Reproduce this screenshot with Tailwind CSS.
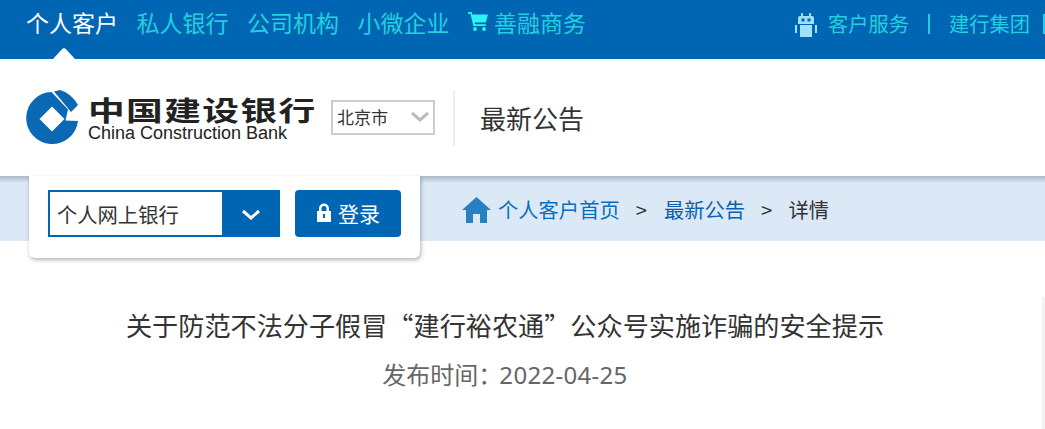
<!DOCTYPE html>
<html lang="zh-CN">
<head>
  <meta charset="UTF-8">
  <title>最新公告</title>
  <script src="https://cdn.jsdelivr.net/npm/@tailwindcss/browser@4"></script>
</head>
<body class="bg-white overflow-hidden h-[429px] w-[1045px] relative font-['Noto_Sans_CJK_SC',sans-serif] text-[#333]">
  <!-- top nav -->
  <nav class="h-[59px] bg-[#0066b3] flex items-start justify-between pl-[26px] pt-[5px] text-[#22d0df] whitespace-nowrap relative">
    <div class="flex items-center gap-[18.5px] text-[23px] leading-[34px]">
      <a class="text-white">个人客户</a>
      <a>私人银行</a>
      <a>公司机构</a>
      <a>小微企业</a>
      <a class="flex items-center gap-[6px]">
        <svg class="w-[20px] h-[20px] -mt-[3px]" viewBox="0 0 20 20" fill="#2df3f5">
          <path d="M0 1h3.6l.8 2.4H20l-2.2 8.2H6.600l.4 1.600h10.800v1.800H5.400L2.400 2.800H0z"/>
          <circle cx="7" cy="18" r="1.900"/>
          <circle cx="16" cy="18" r="1.900"/>
        </svg>
        善融商务
      </a>
    </div>
    <div class="flex items-center text-[20.250px] leading-[34px] mt-[2px]">
      <svg class="w-[22px] h-[24px] mr-[11px] mt-[1px]" viewBox="0 0 22 24" fill="#9fe0ff">
        <rect x="6" y="0" width="2" height="4"/>
        <rect x="14" y="0" width="2" height="4"/>
        <path d="M5 3h12a2 2 0 0 1 2 2v6H3V5a2 2 0 0 1 2-2z"/>
        <rect x="6.500" y="5.500" width="3" height="3" fill="#0066b3"/>
        <rect x="12.500" y="5.500" width="3" height="3" fill="#0066b3"/>
        <rect x="5" y="12" width="12" height="12"/>
        <rect x="0" y="12" width="2" height="8"/>
        <rect x="20" y="12" width="2" height="8"/>
      </svg>
      <a>客户服务</a>
      <span class="w-[2px] h-[20px] bg-[#22d0df] ml-[19px] mr-[19px]"></span>
      <a>建行集团</a>
      <span class="w-[2px] h-[20px] bg-[#22d0df] ml-[13px]"></span>
    </div>
    <span class="absolute left-[53px] bottom-0 w-[22px] h-[11px] bg-white [clip-path:polygon(0_100%,42%_8%,50%_0,58%_8%,100%_100%)]"></span>
  </nav>

  <!-- logo row -->
  <header class="h-[117px] flex items-center pl-[26px]">
    <div class="w-[305px] h-[60px] flex items-center shrink-0">
      <svg class="w-[54px] h-[58px] shrink-0" viewBox="26 90 54 58">
        <path fill="#0a68b4" d="M78 122A26 26 0 1 1 51.500 93L68 110.500L65.500 121.500Z"/>
        <path fill="#0a68b4" d="M54 92.500L60 91Q71 94 78 106L71 113Z"/>
        <polygon fill="#fff" points="52,107.500 64.500,120 52,132.500 39.500,120"/>
      </svg>
      <div class="ml-[8px] mt-[4px] text-[#222]">
        <div class="text-[27px] leading-[27px] font-bold tracking-[1px] scale-x-[1.36] origin-left whitespace-nowrap">中国建设银行</div>
        <div class="text-[18px] leading-[20px] font-['Liberation_Sans',sans-serif] whitespace-nowrap">China Construction Bank</div>
      </div>
    </div>
    <div class="w-[104px] h-[35px] border-2 border-[#ccc] flex items-center justify-between pl-[4px] pr-[3px] pb-[2px] text-[17px] shrink-0">
      <span>北京市</span>
      <svg class="w-[20px] h-[12px]" viewBox="0 0 20 12" fill="none" stroke="#bbb" stroke-width="3"><path d="M2 2l8 7 8-7"/></svg>
    </div>
    <span class="w-[2px] h-[56px] bg-[#eee] ml-[18px] mr-[25px] shrink-0"></span>
    <h1 class="text-[26px] text-[#333]">最新公告</h1>
  </header>

  <!-- breadcrumb band -->
  <div class="h-[65px] bg-[#dbe9f7] bg-linear-to-b from-[#a9b8c4] from-0% to-[#dbe9f7] to-[7px] flex items-center pl-[462px] pt-[2px] text-[20.300px] whitespace-nowrap">
    <svg class="w-[29px] h-[26px] mr-[7px]" viewBox="0 0 29 26" fill="#2a7fc1">
      <path d="M14.500 0L29 13h-4v13h-7V17h-7v9H4V13H0z"/>
    </svg>
    <a class="text-[#0a6fb8]">个人客户首页</a>
    <span class="ml-[16px] mr-[17px] text-[#333]">&gt;</span>
    <a class="text-[#0a62ae]">最新公告</a>
    <span class="ml-[16px] mr-[16px] text-[#333]">&gt;</span>
    <span class="text-[#333]">详情</span>
  </div>

  <!-- login card over the band -->
  <div class="absolute left-[29px] top-[176px] w-[391px] h-[82px] bg-white rounded-b-md shadow-[1px_2px_4px_rgba(0,0,0,0.3)] flex items-start pt-[14px] pl-[19px]">
    <div class="w-[232px] h-[47px] flex border-2 border-[#0066b3]">
      <div class="w-[173px] bg-white pl-[7px] text-[20.300px] leading-[45px] text-[#333] border-r border-[#0066b3]">个人网上银行</div>
      <div class="flex-1 bg-[#0066b3] flex items-center justify-center">
        <svg class="w-[20px] h-[12px] mt-[2px]" viewBox="0 0 20 12" fill="none" stroke="#fff" stroke-width="3"><path d="M2 2l8 7 8-7"/></svg>
      </div>
    </div>
    <button class="w-[106px] h-[47px] ml-[15px] bg-[#0066b3] rounded-[4px] flex items-center justify-center gap-[6px] text-white text-[21px]">
      <svg class="w-[16px] h-[19px] -mt-[2px]" viewBox="0 0 16 19" fill="#fff" fill-rule="evenodd">
        <path d="M3 8V5.500a5 5 0 0 1 10 0V8h2v11H1V8zm2.500 0h5V5.500a2.500 2.500 0 0 0-5 0zM7 11v4h2v-4z"/>
      </svg>
      登录
    </button>
  </div>

  <!-- article head -->
  <main class="w-[1045px] pt-[56px] h-[188px]">
    <div class="h-[132px] border-r-[3px] border-[#f3f3f3]">
      <div class="w-[1010px] text-center">
        <h2 class="text-[26.150px] leading-[56px] text-[#333] whitespace-nowrap">关于防范不法分子假冒“建行裕农通”公众号实施诈骗的安全提示</h2>
        <p class="text-[24px] leading-[42px] text-[#666] font-['Noto_Sans','Noto_Sans_CJK_SC',sans-serif]">发布时间<span class="font-['Noto_Sans_CJK_TC'] tracking-[-3px]">：</span><span class="tracking-[0.3px]">2022-04-25</span></p>
      </div>
    </div>
  </main>
</body>
</html>
